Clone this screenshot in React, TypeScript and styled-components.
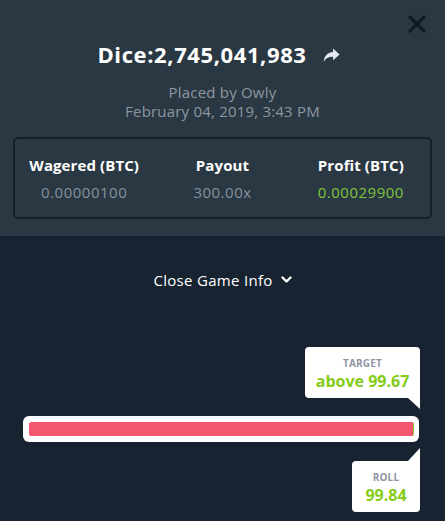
import styled, { createGlobalStyle } from 'styled-components'

const GlobalStyle = createGlobalStyle`
  html, body {
    margin: 0;
    padding: 0;
    background: #172330;
  }
  body {
    font-family: "Open Sans", "Liberation Sans", sans-serif;
  }
`

const bet = {
  id: '2,745,041,983',
  user: 'Owly',
  date: 'February 04, 2019, 3:43 PM',
  wagered: '0.00000100',
  payout: '300.00x',
  profit: '0.00029900',
  target: 99.67,
  roll: 99.84,
}

export default function App() {
  return (
    <>
      <GlobalStyle />
      <Modal>
        <Header>
          <CloseButton aria-label="close">
            <svg width="18" height="18" viewBox="0 0 18 18">
              <path d="M2 2 L16 16 M16 2 L2 16" stroke="#141c23" strokeWidth="3.4" strokeLinecap="round" />
            </svg>
          </CloseButton>
          <TitleRow>
            <Title>Dice:{bet.id}</Title>
            <ShareIcon viewBox="0 0 16 14">
              <path d="M9.5 0.5 L15.6 6 L9.5 11.5 L9.5 8.2 C5.5 8 2.6 9.4 0.6 13 C1.2 7.6 4 4.4 9.5 3.8 Z" fill="#e3e9f2" />
            </ShareIcon>
          </TitleRow>
          <MetaBlock>
            <Meta>Placed by {bet.user}</Meta>
            <Meta>{bet.date}</Meta>
          </MetaBlock>
          <StatsCard>
            <Stat>
              <StatLabel>Wagered (BTC)</StatLabel>
              <StatValue>{bet.wagered}</StatValue>
            </Stat>
            <Stat>
              <StatLabel>Payout</StatLabel>
              <StatValue>{bet.payout}</StatValue>
            </Stat>
            <Stat>
              <StatLabel>Profit (BTC)</StatLabel>
              <StatValue positive>{bet.profit}</StatValue>
            </Stat>
          </StatsCard>
        </Header>
        <Body>
          <ToggleButton>
            Close Game Info
            <svg width="11" height="8" viewBox="0 0 11 8">
              <path d="M1.5 1.5 L5.5 5.5 L9.5 1.5" stroke="#ffffff" strokeWidth="2.4" fill="none" strokeLinecap="round" strokeLinejoin="round" />
            </svg>
          </ToggleButton>
          <SliderWrap>
            <Track>
              <Fill>
                <LoseBar style={{ width: `${bet.target}%` }} />
                <WinBar />
              </Fill>
            </Track>
            <Bubble placement="top">
              <BubbleLabel>TARGET</BubbleLabel>
              <BubbleValue>above {bet.target}</BubbleValue>
              <Tail placement="top" />
            </Bubble>
            <Bubble placement="bottom" narrow>
              <Tail placement="bottom" />
              <BubbleLabel>ROLL</BubbleLabel>
              <BubbleValue>{bet.roll}</BubbleValue>
            </Bubble>
          </SliderWrap>
        </Body>
      </Modal>
    </>
  )
}

const Modal = styled.div`
  width: 445px;
  height: 521px;
  display: flex;
  flex-direction: column;
  overflow: hidden;
`

const Header = styled.div`
  position: relative;
  background: #2a3843;
  height: 236px;
  box-sizing: border-box;
  padding: 39px 13px 0 13px;
  display: flex;
  flex-direction: column;
  align-items: center;
`

const CloseButton = styled.button`
  position: absolute;
  top: 15px;
  right: 19px;
  border: none;
  background: none;
  padding: 0;
  cursor: pointer;
  display: flex;
`

const TitleRow = styled.div`
  display: flex;
  align-items: center;
  gap: 16px;
  margin-right: 8px;
`

const Title = styled.h1`
  margin: 0;
  font-size: 22px;
  font-weight: 700;
  color: #ffffff;
  letter-spacing: 0.6px;
  line-height: 30px;
`

const ShareIcon = styled.svg`
  width: 17px;
  height: 15px;
  margin-top: 2px;
`

const MetaBlock = styled.div`
  margin-top: 14px;
  display: flex;
  flex-direction: column;
  align-items: center;
`

const Meta = styled.div`
  font-size: 15px;
  color: #8d97a1;
  line-height: 19px;
  letter-spacing: 0.2px;
`

const StatsCard = styled.div`
  margin-top: 16px;
  align-self: stretch;
  height: 82px;
  box-sizing: border-box;
  border: 2px solid #151f28;
  border-radius: 5px;
  display: grid;
  grid-template-columns: repeat(3, 1fr);
  align-items: center;
  padding-top: 1px;
`

const Stat = styled.div`
  display: flex;
  flex-direction: column;
  align-items: center;
  gap: 7px;
`

const StatLabel = styled.div`
  font-size: 15px;
  font-weight: 700;
  color: #ffffff;
  letter-spacing: 0.1px;
`

const StatValue = styled.div<{ positive?: boolean }>`
  font-size: 15px;
  color: ${({ positive }) => (positive ? '#7fc43c' : '#87919b')};
  letter-spacing: 0.5px;
`

const Body = styled.div`
  flex: 1;
  background: #172330;
  display: flex;
  flex-direction: column;
  align-items: center;
`

const ToggleButton = styled.button`
  margin-top: 34px;
  border: none;
  background: none;
  padding: 0;
  font-family: inherit;
  font-size: 15px;
  letter-spacing: 0.3px;
  color: #ffffff;
  display: flex;
  align-items: center;
  gap: 8px;
  cursor: pointer;
`

const SliderWrap = styled.div`
  position: relative;
  align-self: stretch;
  margin: 126px 26px 0 23px;
`

const Track = styled.div`
  height: 26px;
  box-sizing: border-box;
  background: #ffffff;
  border-radius: 6px;
  padding: 6px 5px 6px 6px;
`

const Fill = styled.div`
  display: flex;
  height: 100%;
  border-radius: 2px;
  overflow: hidden;
`

const LoseBar = styled.div`
  background: #f5566f;
`

const WinBar = styled.div`
  flex: 1;
  background: #7fcc2a;
`

const Bubble = styled.div<{ placement: 'top' | 'bottom'; narrow?: boolean }>`
  position: absolute;
  right: -1px;
  width: ${({ narrow }) => (narrow ? '68px' : '115px')};
  height: 51px;
  box-sizing: border-box;
  background: #ffffff;
  border-radius: 4px;
  ${({ placement }) =>
    placement === 'top'
      ? 'bottom: 44px; border-bottom-right-radius: 0;'
      : 'top: 45px; border-top-right-radius: 0;'}
  display: flex;
  flex-direction: column;
  align-items: center;
  justify-content: center;
  gap: 1px;
  padding-top: 1px;
`

const Tail = styled.div<{ placement: 'top' | 'bottom' }>`
  position: absolute;
  right: 0;
  width: 0;
  height: 0;
  border-left: 12px solid transparent;
  ${({ placement }) =>
    placement === 'top'
      ? 'top: 100%; border-top: 11px solid #ffffff;'
      : 'bottom: 100%; border-bottom: 13px solid #ffffff;'}
`

const BubbleLabel = styled.div`
  font-size: 10px;
  font-weight: 700;
  color: #8e96a3;
  letter-spacing: 0.2px;
`

const BubbleValue = styled.div`
  font-size: 16px;
  font-weight: 700;
  color: #84cc16;
  line-height: 20px;
`
